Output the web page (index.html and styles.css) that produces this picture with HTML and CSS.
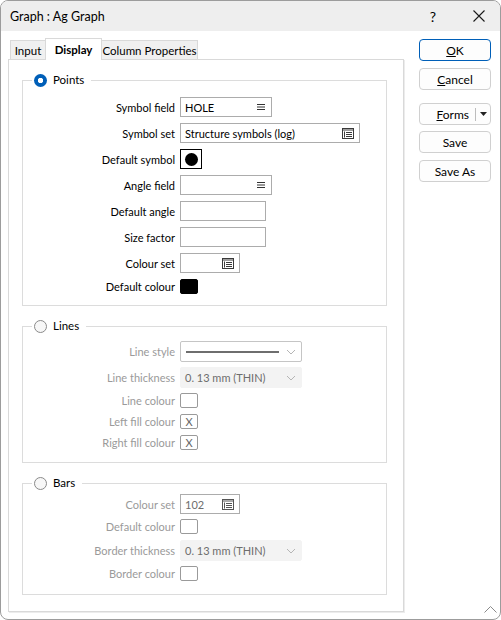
FILE: index.html
```html
<!DOCTYPE html>
<html>
<head>
<meta charset="utf-8">
<link rel="stylesheet" href="styles.css">
</head>
<body>
<div class="window">
  <div class="titlebar">
    <span class="title">Graph : Ag Graph</span>
    <span class="help">?</span>
    <span class="close"><svg width="12" height="12" viewBox="0 0 12 12"><path d="M0.5 0.5L11.5 11.5M11.5 0.5L0.5 11.5" stroke="#1a1a1a" stroke-width="1.1" fill="none"/></svg></span>
  </div>
  <div class="content">
    <div class="tabarea">
      <div class="tabs">
        <div class="tab t-input">Input</div>
        <div class="tab t-display">Display</div>
        <div class="tab t-cols">Column Properties</div>
      </div>
      <div class="panel">
        <fieldset class="group g-points">
          <legend><span class="lg"><span class="radio on"></span>Points</span></legend>
          <div class="rows">
            <div class="row"><label>Symbol field</label><div class="input w92">HOLE<svg class="ic" width="8" height="6" viewBox="0 0 8 6"><path d="M0 0.5h8M0 3h8M0 5.5h8" stroke="#333" stroke-width="1"/></svg></div></div>
            <div class="row mt6"><label>Symbol set</label><div class="input w180 pr5">Structure symbols (log)<svg class="ic" width="12" height="11" viewBox="0 0 12 11"><rect x="0.5" y="0.5" width="11" height="10" fill="none" stroke="#3a3a3a"/><path d="M1 2h10" stroke="#3a3a3a" stroke-width="1"/><path d="M2.5 3.5v6M4 4.5h6M4 6.5h6M4 8.5h6" stroke="#3a3a3a" stroke-width="1"/></svg></div></div>
            <div class="row mt6"><label>Default symbol</label><div class="symbox"><span class="dot"></span></div></div>
            <div class="row mt6"><label>Angle field</label><div class="input w92"><svg class="ic" width="8" height="6" viewBox="0 0 8 6"><path d="M0 0.5h8M0 3h8M0 5.5h8" stroke="#333" stroke-width="1"/></svg></div></div>
            <div class="row mt6"><label>Default angle</label><div class="input w86"></div></div>
            <div class="row mt6"><label>Size factor</label><div class="input w86"></div></div>
            <div class="row mt6"><label>Colour set</label><div class="input w60 pr5"><svg class="ic" width="12" height="11" viewBox="0 0 12 11"><rect x="0.5" y="0.5" width="11" height="10" fill="none" stroke="#3a3a3a"/><path d="M1 2h10" stroke="#3a3a3a" stroke-width="1"/><path d="M2.5 3.5v6M4 4.5h6M4 6.5h6M4 8.5h6" stroke="#3a3a3a" stroke-width="1"/></svg></div></div>
            <div class="row sw mt3"><label>Default colour</label><div class="swatch black"></div></div>
          </div>
        </fieldset>

        <fieldset class="group g-lines">
          <legend><span class="lg"><span class="radio off"></span>Lines</span></legend>
          <div class="rows dis">
            <div class="row h21"><label>Line style</label><div class="combo"><span class="lineprev"></span><svg class="chev" width="10" height="6" viewBox="0 0 10 6"><path d="M1 1l4 4 4-4" fill="none" stroke="#b5b5b5"/></svg></div></div>
            <div class="row h21 mt5"><label>Line thickness</label><div class="combo flat">0. 13 mm (THIN)<svg class="chev" width="10" height="6" viewBox="0 0 10 6"><path d="M1 1l4 4 4-4" fill="none" stroke="#b5b5b5"/></svg></div></div>
            <div class="row sw mt2"><label>Line colour</label><div class="swatch"></div></div>
            <div class="row sw"><label>Left fill colour</label><div class="swatch x">X</div></div>
            <div class="row sw"><label>Right fill colour</label><div class="swatch x">X</div></div>
          </div>
        </fieldset>

        <fieldset class="group g-bars">
          <legend><span class="lg"><span class="radio off"></span>Bars</span></legend>
          <div class="rows dis">
            <div class="row"><label>Colour set</label><div class="input w60 pr5 gray">102<svg class="ic" width="12" height="11" viewBox="0 0 12 11"><rect x="0.5" y="0.5" width="11" height="10" fill="none" stroke="#555"/><path d="M1 2h10" stroke="#555" stroke-width="1"/><path d="M2.5 3.5v6M4 4.5h6M4 6.5h6M4 8.5h6" stroke="#555" stroke-width="1"/></svg></div></div>
            <div class="row sw mt2"><label>Default colour</label><div class="swatch"></div></div>
            <div class="row h21 mt3"><label>Border thickness</label><div class="combo flat">0. 13 mm (THIN)<svg class="chev" width="10" height="6" viewBox="0 0 10 6"><path d="M1 1l4 4 4-4" fill="none" stroke="#b5b5b5"/></svg></div></div>
            <div class="row sw mt2"><label>Border colour</label><div class="swatch"></div></div>
          </div>
        </fieldset>
      </div>
    </div>
    <div class="buttons">
      <div class="btn default b-ok"><span><u>O</u>K</span></div>
      <div class="btn b-cancel"><span><u>C</u>ancel</span></div>
      <div class="btn split b-forms"><span class="main"><u>F</u>orms</span><span class="sep"></span><span class="arrow"><svg width="7" height="4" viewBox="0 0 7 4"><path d="M0 0h7L3.5 4z" fill="#222"/></svg></span></div>
      <div class="btn b-save"><span>Save</span></div>
      <div class="btn b-saveas"><span>Save As</span></div>
    </div>
  </div>
  <svg class="grip" width="13" height="7" viewBox="0 0 13 7"><path d="M0.5 6.5L6.5 0.5L12.5 6.5" fill="none" stroke="#8a8a8a"/></svg>
</div>
</body>
</html>
```

FILE: styles.css
```css
* { box-sizing: border-box; }
html, body { margin: 0; padding: 0; background: #fff; }
body {
  font-family: "Segoe UI", Lato, "Liberation Sans", sans-serif;
  font-size: 11px;
  color: #000;
}

.window {
  width: 501px;
  height: 620px;
  border: 1px solid #9c9c9c;
  border-radius: 8px;
  overflow: hidden;
  position: relative;
  display: flex;
  flex-direction: column;
  background: #fff;
}

.titlebar {
  height: 30px;
  flex: none;
  background: #eeeeee;
  display: flex;
  align-items: center;
  padding-left: 9px;
  font-size: 12.5px;
}
.title { flex: 1; }
.help { width: 14px; text-align: center; margin-right: 33px; font-size: 14px; }
.close { display: flex; margin-right: 15px; }

.content {
  flex: 1;
  display: flex;
  padding: 7px 0 0 7px;
}

.tabarea {
  width: 396px;
  display: flex;
  flex-direction: column;
}
.tabs {
  height: 21px;
  display: flex;
  align-items: flex-end;
  padding-left: 2px;
  position: relative;
  z-index: 1;
  font-size: 11.5px;
}
.tab {
  height: 19px;
  border: 1px solid #d9d9d9;
  border-bottom: none;
  background: #f0f0f0;
  display: flex;
  align-items: center;
  justify-content: center;
  margin-left: -1px;
}
.t-input { width: 36px; margin-left: 0; }
.t-display {
  width: 57px;
  height: 22px;
  margin-bottom: -1px;
  background: #fff;
  font-weight: bold;
}
.t-cols { width: 97px; }

.panel {
  height: 553px;
  border: 1px solid #d9d9d9;
  box-shadow: 1px 1px 0 #ececec;
  padding: 13px 0 0 13px;
}

fieldset.group {
  width: 365px;
  margin: 0;
  padding: 0;
  border: 1px solid #dcdcdc;
  min-width: 0;
}
fieldset.g-points { height: 233px; }
fieldset.g-lines { height: 144px; margin-top: 13px; }
fieldset.g-bars { height: 119px; margin-top: 13px; }

legend {
  margin-left: 9px;
  padding: 0 7px 0 2px;
  height: 14px;
  line-height: 14px;
  font-size: 11.5px;
}
.lg { display: inline-flex; align-items: center; height: 14px; }

.radio {
  width: 13px;
  height: 13px;
  border-radius: 50%;
  margin-right: 6px;
  flex: none;
}
.radio.on { background: radial-gradient(circle at center, #fff 0 2.4px, #005fb8 3px); }
.radio.off { border: 1px solid #8a8a8a; background: #f7f7f7; }

.rows { display: flex; flex-direction: column; }
.g-points .rows { padding-top: 10px; }
.g-lines .rows { padding-top: 8px; }
.g-bars .rows { padding-top: 4px; }

.row { display: flex; align-items: center; height: 20px; flex: none; }
.row.h21 { height: 21px; }
.row.sw { height: 21px; }
.row label { width: 152px; text-align: right; margin-right: 5px; white-space: nowrap; }
.dis label { color: #9a9a9a; }

.mt2 { margin-top: 2px; }
.mt3 { margin-top: 3px; }
.mt5 { margin-top: 5px; }
.mt6 { margin-top: 6px; }

.input {
  height: 20px;
  border: 1px solid #acacac;
  background: #fff;
  display: flex;
  align-items: center;
  padding: 0 6px 0 4px;
  white-space: nowrap;
}
.input.pr5 { padding-right: 5px; }
.input .ic { margin-left: auto; flex: none; }
.input.gray { color: #6d6d6d; }
.w92 { width: 92px; }
.w86 { width: 86px; }
.w60 { width: 60px; }
.w180 { width: 180px; }

.symbox {
  width: 22px;
  height: 20px;
  border: 1px solid #000;
  display: flex;
  align-items: center;
  justify-content: center;
}
.dot { width: 13px; height: 13px; border-radius: 50%; background: #000; }

.swatch {
  width: 18px;
  height: 15px;
  border: 1px solid #9a9a9a;
  border-radius: 2px;
  background: #fff;
}
.swatch.black { background: #000; border-color: #000; }
.swatch.x {
  display: flex;
  align-items: center;
  justify-content: center;
  font-size: 11px;
  color: #666;
  line-height: 1;
}

.combo {
  width: 122px;
  height: 21px;
  border: 1px solid #c5c5c5;
  border-radius: 2px;
  display: flex;
  align-items: center;
  padding: 0 5px;
}
.lineprev { width: 93px; height: 2px; background: #6e6e6e; }
.combo .chev { margin-left: auto; flex: none; }
.combo.flat {
  background: #f3f3f3;
  border-color: #f3f3f3;
  color: #6d6d6d;
  padding-left: 4px;
  white-space: nowrap;
}

.buttons {
  margin-left: 15px;
  width: 72px;
  display: flex;
  flex-direction: column;
}
.btn {
  height: 22px;
  border: 1px solid #d0d0d0;
  border-radius: 4px;
  background: #fdfdfd;
  display: flex;
  align-items: center;
  justify-content: center;
  font-size: 12px;
  flex: none;
}
.btn.default { border-color: #005fb8; }
.b-ok { margin-top: 1px; }
.b-cancel { margin-top: 7px; }
.b-forms { margin-top: 13px; }
.b-save { margin-top: 6px; }
.b-saveas { margin-top: 7px; }
.btn.split { justify-content: flex-start; }
.split .main { width: 55px; text-align: right; padding-right: 6px; }
.split .sep { width: 1px; height: 13px; background: #bdbdbd; }
.split .arrow { flex: 1; display: flex; align-items: center; justify-content: center; }

.grip { position: absolute; right: 3px; bottom: 6px; }
```
